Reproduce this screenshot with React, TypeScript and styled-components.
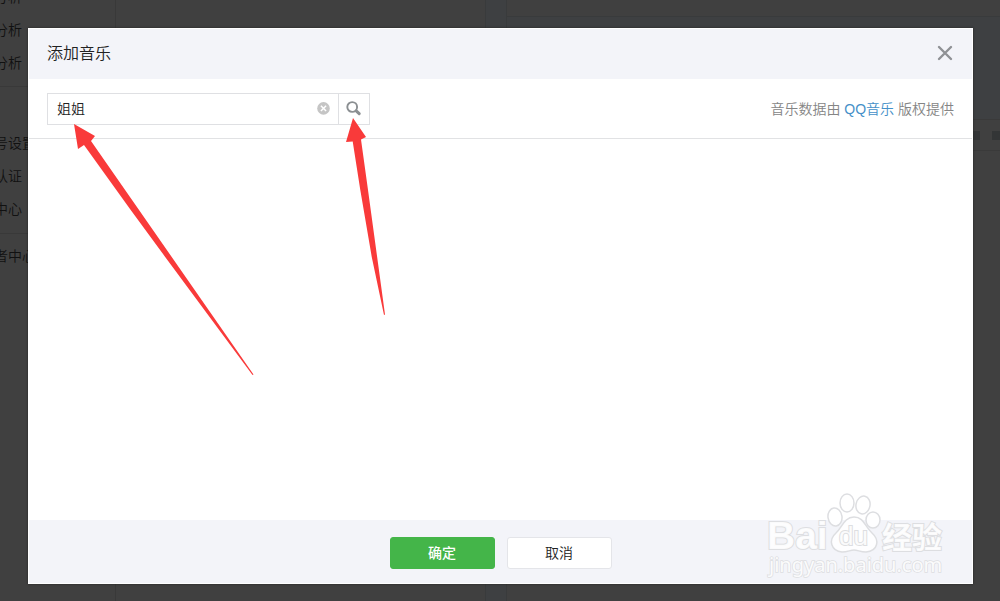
import React, { useState } from "react";
import styled, { createGlobalStyle } from "styled-components";

const Global = createGlobalStyle`
  *, *::before, *::after { box-sizing: border-box; }
  body {
    margin: 0;
    background: #404040;
    font-family: "Liberation Sans", "Noto Sans CJK SC", sans-serif;
    font-size: 14px;
    font-weight: 350;
    line-height: 20px;
    color: #222;
  }
  button, input { font: inherit; color: inherit; }
`;

const Screen = styled.div`
  position: relative;
  min-height: 100vh;
  display: flex;
  overflow: hidden;
`;

const Backdrop = styled.div`
  position: absolute;
  inset: 0;
  display: grid;
  grid-template-columns: 116px 3fr 22px 4fr;
  overflow: hidden;
  color: #111;
`;

const Sidebar = styled.nav`
  border-right: 1px solid #393939;
`;

const NavGroup = styled.ul<{ $gap?: boolean }>`
  list-style: none;
  margin: 0 0 0 -6px;
  padding: ${(p) => (p.$gap ? "40px 0 7px" : "0 0 6px")};
  border-bottom: 1px solid #393939;
  &:first-child { margin-top: -19px; }
  &:last-child { padding-top: 6px; border-bottom: 0; }
`;

const NavItem = styled.li`
  height: 33px;
  line-height: 33px;
  white-space: nowrap;
`;

const PageColumn = styled.div`
  background: #404040;
`;

const Gutter = styled.div`
  background: #3e4042;
  border-left: 1px solid #393b3c;
  border-right: 1px solid #393b3c;
`;

const Preview = styled.div`
  background: #3e4042;
`;

const PreviewTop = styled.div`
  height: 17px;
  background: #404040;
  border-bottom: 1px solid #393b3c;
`;

const PreviewTools = styled.div`
  display: flex;
  align-items: center;
  justify-content: flex-end;
  gap: 12px;
  height: 32px;
  margin-top: 102px;
  background: #404040;
  border: solid #3a3a3a;
  border-width: 1px 0;
`;

const ToolMark = styled.span`
  width: 8px;
  height: 9px;
  background: #333536;
`;

const PreviewPage = styled.div`
  height: 100%;
  background: #404040;
`;

const Dialog = styled.section`
  position: relative;
  flex: 1;
  display: flex;
  flex-direction: column;
  margin: 28px 27px 17px 28px;
  border: 1px solid #fff;
  background: #fff;
  box-shadow: 0 0 2px #222;
`;

const Header = styled.header`
  display: flex;
  align-items: center;
  justify-content: space-between;
  height: 50px;
  padding: 0 18px;
  background: #f3f4f9;
`;

const Title = styled.h1`
  margin: 0;
  font-size: 16px;
  font-weight: 350;
  line-height: 24px;
`;

const IconButton = styled.button`
  display: flex;
  align-items: center;
  justify-content: center;
  padding: 0;
  border: 0;
  background: none;
  cursor: pointer;
`;

const Toolbar = styled.div`
  display: flex;
  align-items: center;
  justify-content: space-between;
  height: 60px;
  padding: 0 18px;
  border-bottom: 1px solid #e1e2e4;
`;

const SearchBox = styled.form`
  display: flex;
  width: 323px;
  height: 32px;
  border: 1px solid #dfe0e3;
`;

const SearchInput = styled.input`
  flex: 1;
  min-width: 0;
  padding: 0 9px;
  border: 0;
  outline: 0;
  background: none;
`;

const ClearButton = styled(IconButton)`
  width: 30px;
`;

const SearchButton = styled(IconButton)`
  width: 31px;
  border-left: 1px solid #dfe0e3;
`;

const Credit = styled.p`
  margin: 0;
  color: #858585;
`;

const CreditLink = styled.a`
  color: #4590c8;
  text-decoration: none;
`;

const Results = styled.div`
  flex: 1;
`;

const Footer = styled.footer`
  display: flex;
  justify-content: center;
  align-items: center;
  gap: 12px;
  height: 63px;
  padding-top: 2px;
  background: #f3f4f9;
`;

const ActionButton = styled.button<{ $primary?: boolean }>`
  width: 105px;
  height: 32px;
  padding: 0;
  border: 1px solid ${(p) => (p.$primary ? "#44b549" : "#e4e5e9")};
  border-radius: 3px;
  background: ${(p) => (p.$primary ? "#44b549" : "#fff")};
  color: ${(p) => (p.$primary ? "#fff" : "#222")};
  font-weight: ${(p) => (p.$primary ? 500 : 350)};
  cursor: pointer;
`;

const Arrows = styled.svg`
  position: absolute;
  top: 0;
  left: 0;
  pointer-events: none;
`;

const Watermark = styled.svg`
  position: absolute;
  right: 50px;
  bottom: 20px;
  pointer-events: none;
  text { paint-order: stroke; }
`;

const navGroups = [
  ["分析", "分析", "分析"],
  ["号设置", "认证", "中心"],
  ["者中心"],
];

export default function App() {
  const [query, setQuery] = useState("姐姐");

  return (
    <Screen>
      <Global />
      <Backdrop>
        <Sidebar>
          {navGroups.map((items, g) => (
            <NavGroup key={g} $gap={g === 1}>
              {items.map((label, i) => (
                <NavItem key={i}>{label}</NavItem>
              ))}
            </NavGroup>
          ))}
        </Sidebar>
        <PageColumn />
        <Gutter />
        <Preview>
          <PreviewTop />
          <PreviewTools>
            <ToolMark />
            <ToolMark />
          </PreviewTools>
          <PreviewPage />
        </Preview>
      </Backdrop>

      <Dialog role="dialog" aria-labelledby="dialog-title">
        <Header>
          <Title id="dialog-title">添加音乐</Title>
          <IconButton type="button" aria-label="关闭">
            <svg width="18" height="18" viewBox="0 0 18 18" fill="none" stroke="#8f9195" strokeWidth="2.4" strokeLinecap="round">
              <path d="M3 2 15 14M15 2 3 14" />
            </svg>
          </IconButton>
        </Header>

        <Toolbar>
          <SearchBox onSubmit={(e) => e.preventDefault()}>
            <SearchInput aria-label="搜索音乐" value={query} onChange={(e) => setQuery(e.target.value)} />
            <ClearButton type="button" aria-label="清除" onClick={() => setQuery("")}>
              <svg width="14" height="14" viewBox="0 0 14 14">
                <circle cx="7.5" cy="6.4" r="6.3" fill="#c5c5c5" />
                <path d="M4.9 3.8l5.2 5.2M10.1 3.8l-5.2 5.2" stroke="#fff" strokeWidth="1.5" />
              </svg>
            </ClearButton>
            <SearchButton type="submit" aria-label="搜索">
              <svg width="16" height="16" viewBox="0 0 16 16" fill="none" stroke="#8b8f92">
                <circle cx="6.2" cy="6" r="4.9" strokeWidth="1.9" />
                <path d="M10.2 9.8l3 2.9" strokeWidth="3" strokeLinecap="round" />
              </svg>
            </SearchButton>
          </SearchBox>
          <Credit>
            音乐数据由 <CreditLink href="#qq-music">QQ音乐</CreditLink> 版权提供
          </Credit>
        </Toolbar>

        <Results />

        <Footer>
          <ActionButton type="button" $primary>确定</ActionButton>
          <ActionButton type="button">取消</ActionButton>
        </Footer>
      </Dialog>

      <Arrows width="400" height="380" viewBox="0 0 400 380" fill="#f93a3a" aria-hidden="true">
        <path d="M74 124 95 136 91 141 253.5 374.5 252.5 375 165 256.7 130 209 84 145 78 149Z" />
        <path d="M353 118 366 137 361 139.5 368 190 385 314.5 384 315 371.7 256.7 360.3 190 352.7 141.5 346 142Z" />
      </Arrows>

      <Watermark width="184" height="92" viewBox="0 0 184 92" fill="#fff" fillOpacity="0.9" stroke="#dddee1" strokeWidth="1.5" aria-hidden="true">
        <ellipse cx="69" cy="28" rx="7" ry="9" transform="rotate(-8 69 28)" />
        <ellipse cx="81" cy="14" rx="7" ry="9" />
        <ellipse cx="97" cy="16" rx="7" ry="9" transform="rotate(12 97 16)" />
        <ellipse cx="107" cy="31" rx="7" ry="8" />
        <path d="M88 28C78 28 76 39 70 44C62 51 65 62 76 63C82 63 84 61 88 61C92 61 94 63 100 63C112 62 114 51 106 44C99 38 98 28 88 28Z" />
        <text x="1" y="60" fontFamily="Liberation Sans" fontSize="39" fontWeight="700" strokeWidth="2">Bai</text>
        <text x="73" y="56" fontFamily="Liberation Sans" fontSize="26" fontWeight="400" strokeWidth="2">du</text>
        <text x="116" y="59" fontFamily="Noto Sans CJK SC" fontSize="30" fontWeight="700" strokeWidth="2">经验</text>
        <text x="3" y="83" fontFamily="Noto Sans" fontSize="20" fontWeight="400" strokeWidth="1.5">jingyan.baidu.com</text>
      </Watermark>
    </Screen>
  );
}
